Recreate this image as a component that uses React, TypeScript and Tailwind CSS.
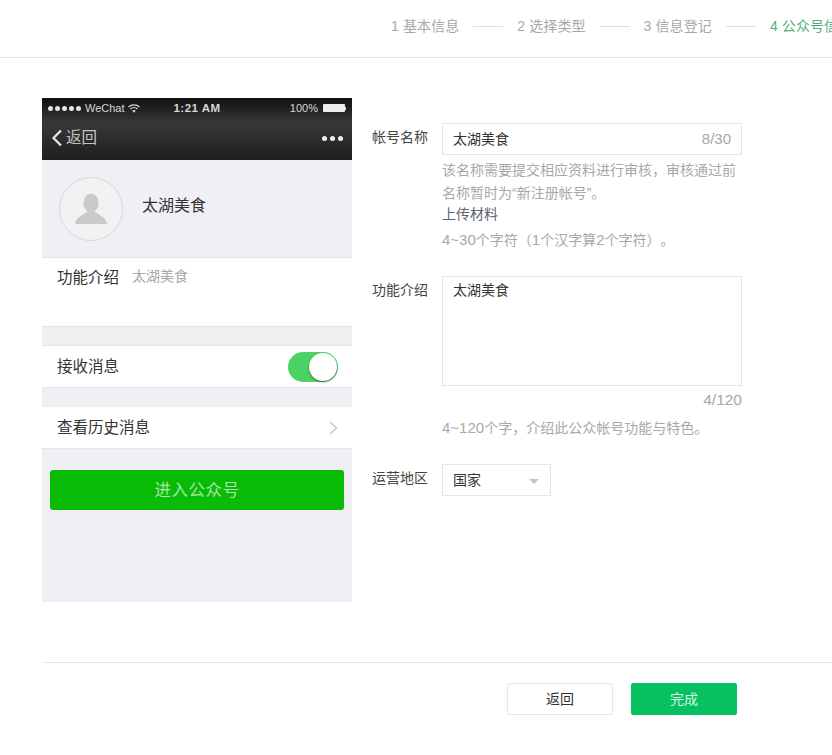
import React from 'react'

function Step({ n, text, active }: { n: string; text: string; active?: boolean }) {
  return (
    <span className={`whitespace-nowrap text-[14px] leading-[20px] tracking-[0.1px] ${active ? 'text-[#4fb27a]' : 'text-[#a8a8a8]'}`}>
      {n} {text}
    </span>
  )
}

function Line() {
  return <span className="w-[30px] h-px bg-[#dddddd] mx-[14px] shrink-0" />
}

function Wifi() {
  return (
    <svg width="12" height="9" viewBox="0 0 12 9" className="ml-[3px]">
      <path d="M0.5 3 A8 8 0 0 1 11.5 3" fill="none" stroke="#d8d8d8" strokeWidth="1.3" />
      <path d="M2.5 5 A5 5 0 0 1 9.5 5" fill="none" stroke="#d8d8d8" strokeWidth="1.3" />
      <path d="M4.2 6.8 A2.6 2.6 0 0 1 7.8 6.8 L6 8.8 Z" fill="#d8d8d8" />
    </svg>
  )
}

function Phone() {
  return (
    <div className="w-[310px] h-[504px] bg-[#efeff4] shrink-0 flex flex-col">
      <div className="h-[62px] bg-gradient-to-b from-[#111111] via-[#38383a] via-40% to-[#1f1f21] flex flex-col">
        <div className="h-[20px] px-[6px] flex items-center justify-between text-[#d6d6d6] text-[11px]">
          <div className="flex items-center w-[110px]">
            <span className="flex gap-[2px] mr-[4px]">
              {[0, 1, 2, 3, 4].map((i) => (
                <span key={i} className="w-[5px] h-[5px] rounded-full bg-[#e6e6e6]" />
              ))}
            </span>
            <span className="leading-none">WeChat</span>
            <Wifi />
          </div>
          <span className="font-bold text-[11.5px] tracking-[0.5px] leading-none mt-[1px]">1:21 AM</span>
          <div className="flex items-center justify-end w-[110px]">
            <span className="leading-none mr-[5px]">100%</span>
            <span className="w-[22px] h-[8px] bg-[#eeeeee] rounded-[1px]" />
            <span className="w-px h-[3px] bg-[#dddddd]" />
          </div>
        </div>
        <div className="h-[42px] pl-[9px] pr-[9px] pb-[2px] flex items-center justify-between">
          <div className="flex items-center">
            <svg width="12" height="18" viewBox="0 0 12 18">
              <path d="M10 1.5 L2.5 9 L10 16.5" fill="none" stroke="#e8e8e8" strokeWidth="2.2" />
            </svg>
            <span className="text-[15.5px] leading-none text-[#c4c4c4] ml-[3px]">返回</span>
          </div>
          <div className="flex gap-[3px]">
            <span className="w-[5px] h-[5px] rounded-full bg-[#eeeeee]" />
            <span className="w-[5px] h-[5px] rounded-full bg-[#eeeeee]" />
            <span className="w-[5px] h-[5px] rounded-full bg-[#eeeeee]" />
          </div>
        </div>
      </div>

      <div className="h-[98px] pl-[17px] flex items-center border-b border-[#e4e4e6]">
        <div className="w-[64px] h-[64px] rounded-full border border-[#d8d8d8] bg-[#f2f2f4] flex items-center justify-center">
          <svg width="34" height="34" viewBox="0 0 34 34">
            <ellipse cx="17" cy="11" rx="7.5" ry="9.5" fill="#c9c9c9" />
            <path d="M1 32 C2 25 9 23 13 20 H21 C25 23 32 25 33 32 Z" fill="#c9c9c9" />
          </svg>
        </div>
        <span className="ml-[19px] mb-[5px] text-[16px] leading-none text-[#333333]">太湖美食</span>
      </div>

      <div className="h-[69px] bg-white border-b border-[#e4e4e6] pl-[15px] flex items-start pt-[10px]">
        <span className="text-[15.5px] leading-[20px] text-[#333333]">功能介绍</span>
        <span className="ml-[13px] text-[14px] leading-[16px] text-[#a8a8a8]">太湖美食</span>
      </div>

      <div className="mt-[18px] h-[43px] bg-white border-y border-[#e6e6e8] pl-[15px] pr-[14px] flex items-center justify-between">
        <span className="text-[15.5px] leading-none text-[#333333]">接收消息</span>
        <span className="relative w-[50px] h-[30px] rounded-full bg-[#4cd264]">
          <span className="absolute right-px top-px w-[28px] h-[28px] rounded-full bg-white shadow-[0_1px_2px_rgba(0,0,0,0.5)]" />
        </span>
      </div>

      <div className="mt-[19px] h-[42px] bg-white border-b border-[#e6e6e8] pl-[15px] pr-[14px] flex items-center justify-between">
        <span className="text-[15.5px] leading-none text-[#333333] mt-[1px]">查看历史消息</span>
        <svg width="9" height="14" viewBox="0 0 9 14">
          <path d="M1 1 L7.5 7 L1 13" fill="none" stroke="#c7c7cc" strokeWidth="1.4" />
        </svg>
      </div>

      <div className="mt-[21px] mx-[8px] h-[40px] rounded-[3px] bg-[#09bb07] flex items-center justify-center text-[16.5px] tracking-[0.5px] text-[#a6e8a5]">
        进入公众号
      </div>
    </div>
  )
}

function Label({ children }: { children: React.ReactNode }) {
  return <div className="w-[70px] shrink-0 pt-[4px] text-[14px] leading-[20px] text-[#444444]">{children}</div>
}

function Form() {
  return (
    <div className="ml-[20px] w-[370px] pt-[25px] text-[14px] [text-spacing-trim:space-all]">
      <div className="flex">
        <Label>帐号名称</Label>
        <div className="w-[300px]">
          <div className="h-[32px] border border-[#e6e6e6] pl-[10px] pr-[10px] flex items-center justify-between">
            <span className="text-[#333333]">太湖美食</span>
            <span className="text-[15px] text-[#a6a6a6]">8/30</span>
          </div>
          <p className="mt-[4px] text-[#a8a8a8] leading-[23px]">该名称需要提交相应资料进行审核，审核通过前</p>
          <p className="text-[#a8a8a8] leading-[22px]">名称暂时为“新注册帐号”。</p>
          <p className="text-[#5b6270] leading-[20px]">上传材料</p>
          <p className="mt-[6px] text-[15px] text-[#a8a8a8] leading-[20px]">
            4~30<span className="text-[14px]">个字符（</span>1<span className="text-[14px]">个汉字算</span>2<span className="text-[14px]">个字符）。</span>
          </p>
        </div>
      </div>

      <div className="flex mt-[26px]">
        <Label>功能介绍</Label>
        <div className="w-[300px]">
          <div className="h-[110px] border border-[#e6e6e6] pl-[10px] pt-[3px] leading-[20px] text-[#333333]">太湖美食</div>
          <div className="mt-[4px] text-right text-[15.5px] leading-[20px] text-[#a6a6a6]">4/120</div>
          <p className="mt-[8px] text-[15px] leading-[20px] text-[#a8a8a8]">
            4~120<span className="text-[14px]">个字，介绍此公众帐号功能与特色。</span>
          </p>
        </div>
      </div>

      <div className="flex mt-[26px]">
        <Label>运营地区</Label>
        <div className="w-[109px] h-[32px] border border-[#e6e6e6] pl-[10px] pr-[11px] flex items-center justify-between">
          <span className="text-[#333333]">国家</span>
          <span className="w-0 h-0 border-x-[5px] border-x-transparent border-t-[5px] border-t-[#c4c4c4] mt-[2px]" />
        </div>
      </div>
    </div>
  )
}

export default function App() {
  return (
    <div className="w-[832px] h-[755px] overflow-hidden bg-white flex flex-col font-['Liberation_Sans','Noto_Sans_CJK_SC',sans-serif]">
      <div className="h-[58px] shrink-0 border-b border-[#e8e8e8] pl-[391px] flex items-center pb-[5px]">
        <Step n="1" text="基本信息" />
        <Line />
        <Step n="2" text="选择类型" />
        <Line />
        <Step n="3" text="信息登记" />
        <Line />
        <Step n="4" text="公众号信息" active />
      </div>

      <div className="pl-[42px] pt-[40px] h-[604px] shrink-0 flex">
        <Phone />
        <Form />
      </div>

      <div className="ml-[42px] border-t border-[#e8e8e8] pt-[20px] pl-[465px] flex gap-[18px]">
        <button className="w-[106px] h-[32px] rounded-[2px] border border-[#e6e6e6] bg-white text-[14px] text-[#333333]">返回</button>
        <button className="w-[106px] h-[32px] rounded-[2px] bg-[#07c160] text-[14px] text-[#d8f5e5]">完成</button>
      </div>
    </div>
  )
}
